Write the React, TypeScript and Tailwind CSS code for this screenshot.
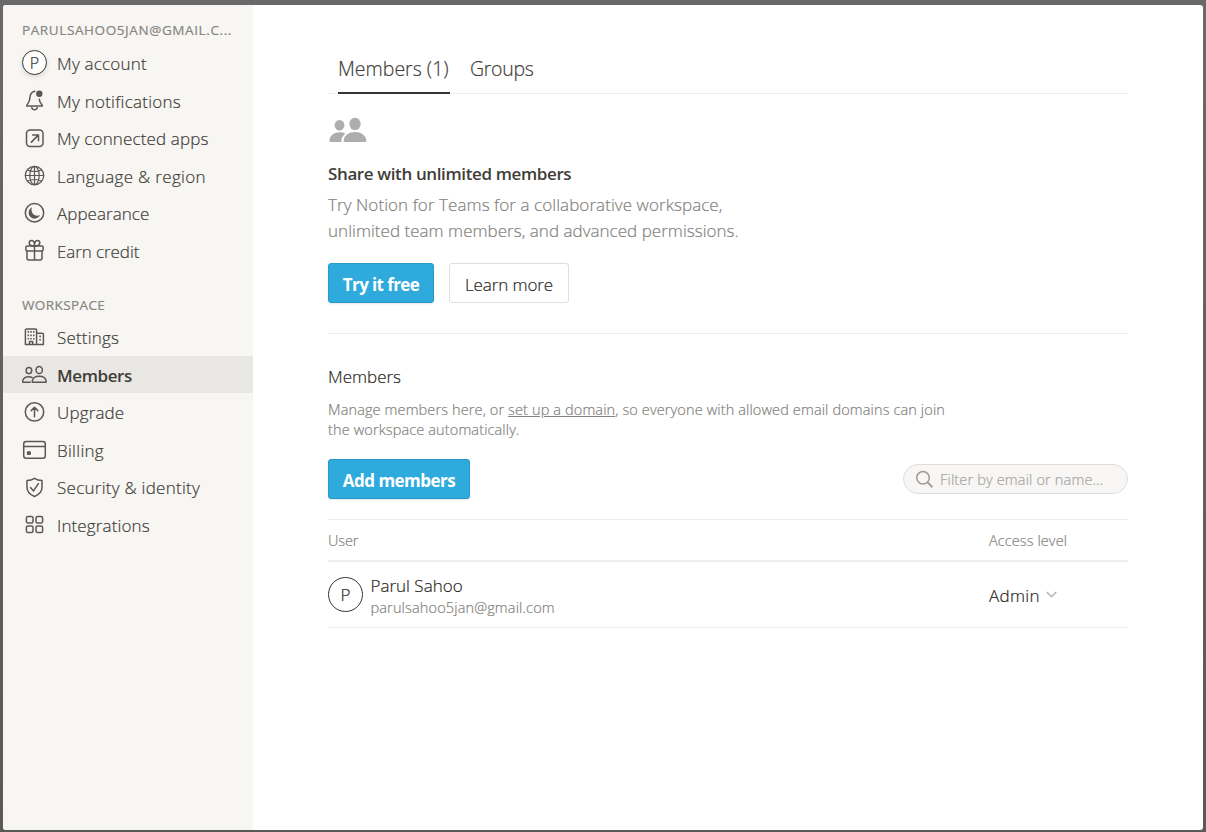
import React from "react";

type IconProps = { children: React.ReactNode };

const Icon = ({ children }: IconProps) => (
  <svg width="25" height="25" viewBox="0 0 25 25" fill="none" stroke="#5a5853" strokeWidth="1.5" strokeLinecap="round" strokeLinejoin="round" className="mt-px shrink-0">
    {children}
  </svg>
);

const bell = (
  <Icon>
    <path d="M12.800 3.200C9.600 3.800 8.200 6 8 9.200c-.2 3.200-.8 5-2.400 6.800-.6.700-1 1.200-.9 2.100h15.600c.1-.9-.3-1.400-.9-2.100-1.200-1.300-1.800-2.700-2.100-4.700" />
    <path d="M9.800 19.600c.3 1.400 1.300 2.200 2.700 2.200s2.400-.8 2.700-2.200" />
    <circle cx="17.300" cy="5.800" r="3.200" fill="#5a5853" stroke="none" />
  </Icon>
);
const connected = (
  <Icon>
    <rect x="4.500" y="3.900" width="16.500" height="16.500" rx="3.500" />
    <path d="M9.400 16.100l6.600-6.700M10.700 8.900h5.800v5.800" />
  </Icon>
);
const globe = (
  <Icon>
    <g strokeWidth="1.200">
      <circle cx="12.500" cy="12.500" r="9.200" />
      <ellipse cx="12.500" cy="12.500" rx="4.700" ry="9.200" />
      <path d="M12.500 3.300v18.400M3.300 12.500h18.400M5.400 7c4.300 1.800 9.900 1.800 14.200 0M5.400 18c4.300-1.800 9.900-1.800 14.200 0" />
    </g>
  </Icon>
);
const moon = (
  <Icon>
    <circle cx="12.500" cy="11.700" r="9.200" />
    <path d="M9.900 6.300a6 6 0 1 0 8.200 7.800c-5.600 2.400-10-2.600-8.200-7.800z" fill="#5a5853" stroke="none" />
  </Icon>
);
const gift = (
  <Icon>
    <rect x="3.900" y="8" width="17.200" height="5" rx="1.300" />
    <path d="M5 13.200v6.900c0 1.300.7 2 2 2h11c1.300 0 2-.7 2-2v-6.900M12.500 8v14M12.500 7.800C9.500 8.200 7.200 7 7.200 5.100c0-1.500 1-2.500 2.400-2.500 1.900 0 2.900 2.100 2.900 5.200 0-3.100 1-5.200 2.900-5.200 1.400 0 2.400 1 2.400 2.500 0 1.900-2.300 3.100-5.300 2.700z" />
  </Icon>
);
const building = (
  <Icon>
    <path d="M3.400 19.600V5c0-.7.400-1.100 1.100-1.100h9c.7 0 1.100.4 1.100 1.100v14.600zM14.800 8.200h5.500c.7 0 1.100.4 1.100 1.100v10.300h-6.600M7.500 19.400v-2.900h3.200v2.900" />
    <path d="M5.600 6.100h1.500v1.700H5.600zM8.300 6.100h1.500v1.700H8.300zM11 6.100h1.500v1.700H11zM5.600 9.500h1.500v1.700H5.600zM8.300 9.500h1.500v1.700H8.300zM11 9.500h1.500v1.700H11zM5.600 12.900h1.500v1.700H5.600zM8.300 12.900h1.500v1.700H8.300zM11 12.900h1.500v1.700H11zM17.300 10.600h1.600v1.700h-1.600zM17.300 13.900h1.600v1.700h-1.600z" fill="#5a5853" stroke="none" />
  </Icon>
);
const people = (
  <Icon>
    <ellipse cx="6.900" cy="8.600" rx="2.800" ry="3.100" />
    <ellipse cx="17.200" cy="8" rx="3.200" ry="3.600" />
    <path d="M8.200 20.300H1.600c-.7 0-1-.4-.9-1.100.4-2.800 3-4.400 6.200-4.400 1.200 0 2.200.2 3.100.7" />
    <path d="M11 20.300c-.6 0-.9-.4-.8-1 .4-3.100 3.400-5 7-5s6.600 1.900 7 5c.1.600-.2 1-.8 1z" />
  </Icon>
);
const upgrade = (
  <Icon>
    <circle cx="12.500" cy="11.900" r="9.200" />
    <path d="M12.500 16.800V7.600M9.200 10.600l3.300-3.300 3.300 3.300" />
  </Icon>
);
const card = (
  <Icon>
    <rect x="1.700" y="4.500" width="21.600" height="16.700" rx="2.500" />
    <path d="M1.900 9.400h21.200" />
    <rect x="4.900" y="14.300" width="4" height="3.800" rx="1" fill="#5a5853" stroke="none" />
  </Icon>
);
const shield = (
  <Icon>
    <path d="M12.500 3.300c2.400 1.600 4.800 2.100 7.500 2.200v6.900c0 4.700-3.200 7.200-7.500 9.100-4.300-1.900-7.500-4.400-7.500-9.100V5.500c2.700-.1 5.100-.6 7.500-2.200z" />
    <path d="M8.500 12.600l3 3.300 4.900-7.200" />
  </Icon>
);
const grid = (
  <Icon>
    <rect x="4.400" y="4.400" width="6.600" height="6.600" rx="1.600" />
    <rect x="14" y="4.400" width="6.600" height="6.600" rx="1.600" />
    <rect x="4.400" y="14" width="6.600" height="6.600" rx="1.600" />
    <rect x="14" y="14" width="6.600" height="6.600" rx="1.600" />
  </Icon>
);

const avatar = (
  <span className="flex size-[25px] shrink-0 items-center justify-center rounded-full border border-[#37352f] bg-white text-[16px] leading-none text-[#37352f] shadow-[0_2px_5px_rgba(15,15,15,0.12)]">
    P
  </span>
);

type RowProps = { icon: React.ReactNode; label: string; cls?: string; active?: boolean };

const Row = ({ icon, label, cls = "", active = false }: RowProps) => (
  <li
    className={`flex h-[37.5px] items-center gap-[10px] pl-[19px] text-[17px] leading-none text-[#3f3d38] ${
      active ? "bg-[#e8e7e4] font-semibold [-webkit-text-stroke:0]" : ""
    }`}
  >
    {icon}
    <span className={`pt-[2px] whitespace-nowrap ${cls}`}>{label}</span>
  </li>
);

export default function App() {
  return (
    <div className="h-[832px] w-[1206px] bg-linear-to-b from-[#6a6969] to-[#5a595a] px-[3px] pt-[5px] pb-[2px] font-['Open_Sans','Noto_Sans',sans-serif] font-light [-webkit-text-stroke:0.2px]">
      <div className="flex h-[825px] overflow-hidden rounded-[3px] bg-white">
        <aside className="w-[250px] shrink-0 bg-[#f7f6f3] pt-[13px]">
          <h2 className="flex h-[26px] items-start pt-[6px] pl-[19px] text-[13.5px] leading-none font-normal text-[#86857f]">
            <span className="tracking-[0.6px] whitespace-nowrap">PARULSAHOO5JAN@GMAIL.C...</span>
          </h2>
          <ul>
            <Row icon={avatar} label="My account" cls="tracking-[0.2px]" />
            <Row icon={bell} label="My notifications" cls="tracking-[0.25px]" />
            <Row icon={connected} label="My connected apps" cls="tracking-[0.14px]" />
            <Row icon={globe} label="Language & region" cls="tracking-[0.32px]" />
            <Row icon={moon} label="Appearance" cls="tracking-[0.05px]" />
            <Row icon={gift} label="Earn credit" cls="tracking-[-0.08px]" />
          </ul>
          <h2 className="flex h-[49px] items-end pb-[6px] pl-[19px] text-[13.5px] leading-none font-normal text-[#86857f]">
            <span className="tracking-[0.4px]">WORKSPACE</span>
          </h2>
          <ul>
            <Row icon={building} label="Settings" cls="tracking-[0.18px]" />
            <Row icon={people} label="Members" cls="tracking-[-0.4px]" active />
            <Row icon={upgrade} label="Upgrade" cls="tracking-[0.15px]" />
            <Row icon={card} label="Billing" cls="tracking-[0.3px]" />
            <Row icon={shield} label="Security & identity" cls="tracking-[0.27px]" />
            <Row icon={grid} label="Integrations" cls="tracking-[0.12px]" />
          </ul>
        </aside>
        <main className="flex-1 px-[75px] text-[#2a2823]">
          <nav className="flex h-[89px] items-end border-b border-[#ededec] pl-[10px] text-[19.5px] leading-none text-[#3f3d38]">
            <span className="-mb-px h-[38px] w-[112px] border-b-2 border-[#37352f] pt-[3px] whitespace-nowrap">Members (1)</span>
            <span className="ml-[20px] h-[37px] pt-[3px] tracking-[-0.3px]">Groups</span>
          </nav>
          <svg className="mt-[22px] block" width="40" height="28" viewBox="0 0 40 28" fill="#adadab">
            <ellipse cx="11.500" cy="9.200" rx="4.900" ry="5.300" />
            <ellipse cx="27" cy="8" rx="5.600" ry="6.200" />
            <path d="M17.500 17.700c-1.700-1-3.700-1.400-6-1.400-5.200 0-9.400 3.100-10 7.400-.2 1.500.4 2.300 1.900 2.300h10.300c-.4-.6-.5-1.300-.3-2.200.5-2.400 1.900-4.600 4.100-6.100z" />
            <path d="M27 16c-6 0-10.600 3.500-11.300 7.700-.2 1.500.4 2.300 1.900 2.300h18.800c1.500 0 2.100-.8 1.900-2.300C37.600 19.500 33 16 27 16z" />
          </svg>
          <h3 className="mt-[19px] text-[17px] leading-[22px] font-semibold tracking-[-0.38px] text-[#3f3d38] [-webkit-text-stroke:0]">
            Share with unlimited members
          </h3>
          <p className="mt-[7px] text-[17px] leading-[26px] text-[#83827d]">
            <span className="tracking-[0.07px]">Try Notion for Teams for a collaborative workspace,</span>
            <br />
            <span className="tracking-[0.03px]">unlimited team members, and advanced permissions.</span>
          </p>
          <div className="mt-[19px] flex gap-[15px]">
            <button className="h-[40px] w-[106px] rounded-[3px] border border-[#2798c9] bg-[#2eaadc] pt-[3px] text-[17px] font-bold tracking-[-0.6px] text-white shadow-[0_1px_2px_rgba(15,15,15,0.1)] [-webkit-text-stroke:0]">
              Try it free
            </button>
            <button className="h-[40px] w-[120px] rounded-[3px] border border-[#dededc] pt-[3px] text-[17px] tracking-[-0.1px]">Learn more</button>
          </div>
          <hr className="mt-[30px] border-[#ededec]" />
          <h3 className="mt-[32px] text-[17px] leading-[22px]">Members</h3>
          <p className="mt-[12px] text-[14.5px] leading-[20px] tracking-[0.13px] text-[#83827d]">
            Manage members here, or <u>set up a domain</u>, so everyone with allowed email domains can join
            <br />
            the workspace automatically.
          </p>
          <div className="mt-[19px] flex items-center justify-between">
            <button className="h-[40px] w-[142px] rounded-[3px] border border-[#2798c9] bg-[#2eaadc] pt-[3px] text-[17px] font-bold tracking-[-0.5px] text-white shadow-[0_1px_2px_rgba(15,15,15,0.1)] [-webkit-text-stroke:0]">
              Add members
            </button>
            <div className="flex h-[30px] w-[225px] items-center rounded-full border border-[#dededc] bg-[#f7f6f5] pl-[11px] text-[14.5px] text-[#a5a4a1]">
              <svg width="19" height="19" viewBox="0 0 19 19" fill="none" stroke="#9a9996" strokeWidth="1.500">
                <circle cx="8" cy="7.800" r="6.300" />
                <path d="M12.600 12.300l4.800 4.800" strokeWidth="1.900" />
              </svg>
              <span className="ml-[6px] pt-[2px] tracking-[0.16px]">Filter by email or name...</span>
            </div>
          </div>
          <div className="mt-[20px] flex h-[43px] items-center border-t border-b-2 border-[#ededec] pt-[2px] text-[14.5px] text-[#83827d]">
            <span className="w-[661px] tracking-[-0.15px]">User</span>
            <span className="tracking-[0.1px]">Access level</span>
          </div>
          <div className="flex h-[66px] items-center border-b border-[#ededec]">
            <span className="flex size-[35px] items-center justify-center rounded-full border border-[#37352f] text-[17px]">P</span>
            <div className="ml-[7.5px] w-[618.5px] pt-[3px]">
              <div className="text-[17px] leading-[22px]">Parul Sahoo</div>
              <div className="text-[14.5px] leading-[21px] tracking-[0.15px] text-[#83827d]">parulsahoo5jan@gmail.com</div>
            </div>
            <span className="flex items-center text-[17px]">
              <span className="pt-[2px] tracking-[0.3px]">Admin</span>
              <svg className="ml-[6px]" width="11" height="8" viewBox="0 0 11 8" fill="none" stroke="#b3b2af" strokeWidth="1.500">
                <path d="M.8 1l4.700 4.700L10.200 1" />
              </svg>
            </span>
          </div>
        </main>
      </div>
    </div>
  );
}
